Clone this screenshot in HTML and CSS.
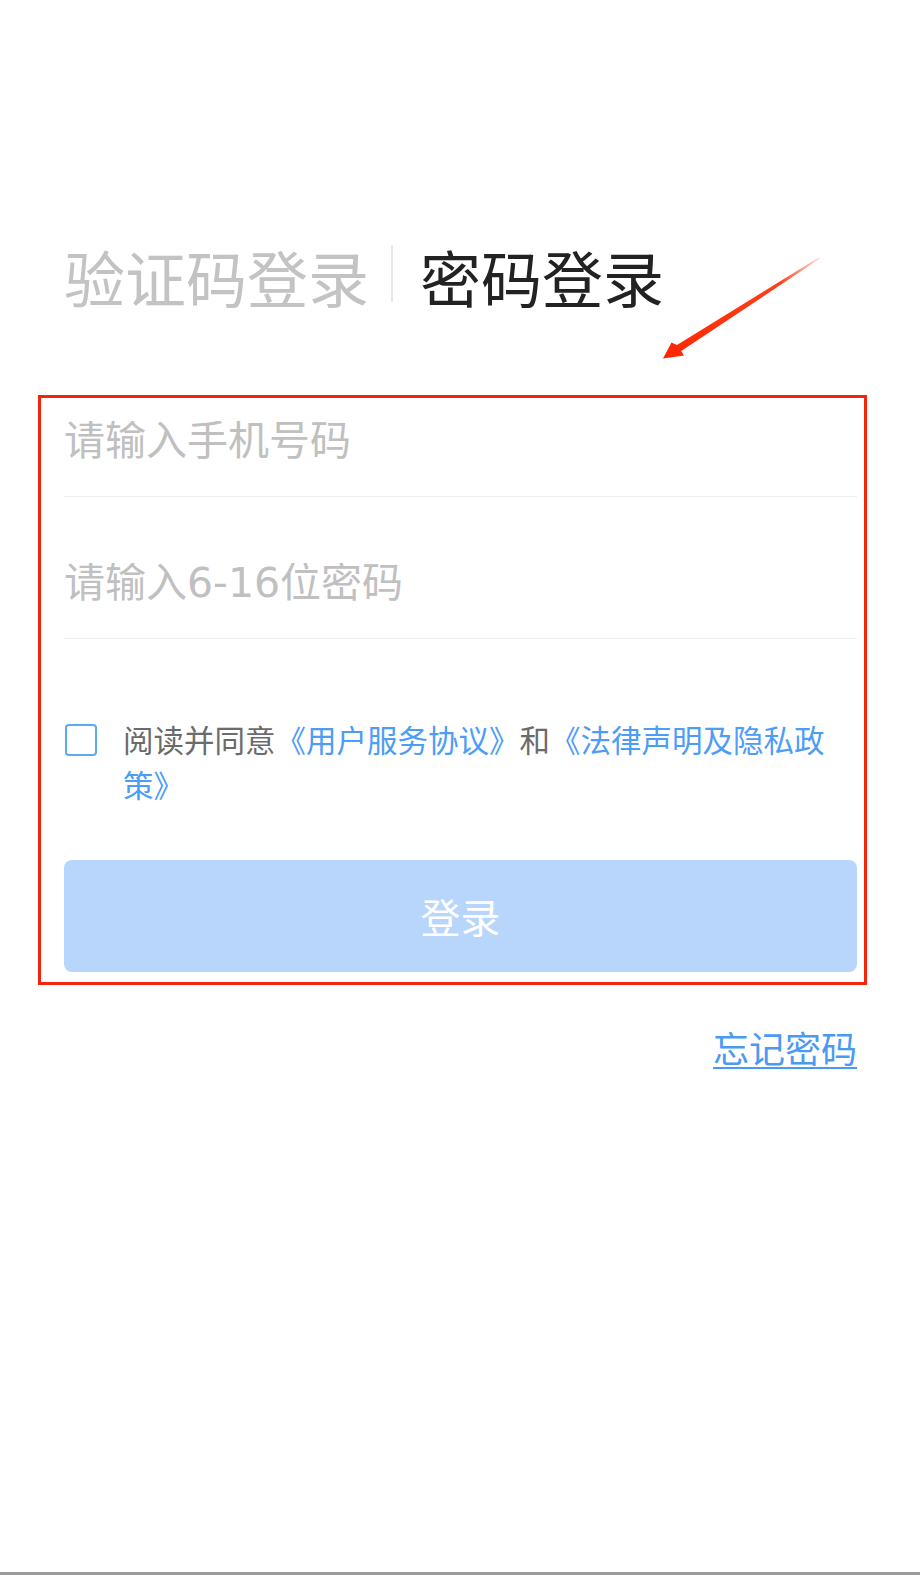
FILE: index.html
```html
<!DOCTYPE html>
<html lang="zh-CN">
<head>
  <meta charset="UTF-8" />
  <title>密码登录</title>
  <link rel="stylesheet" href="styles.css">
</head>
<body>
  <div class="page">
    <!-- Tabs: Verifizierungscode / Passwort -->
    <div class="tabs">
      <span class="tab">验证码登录</span>
      <span class="tab-divider"></span>
      <span class="tab active">密码登录</span>
    </div>

    <!-- Hinweis-Pfeil (Annotation) -->
    <svg class="hint-arrow" width="180" height="120" viewBox="0 0 180 120">
      <defs>
        <linearGradient id="arrowFade" x1="169" y1="8" x2="13" y2="108" gradientUnits="userSpaceOnUse">
          <stop offset="0" stop-color="#ff2a00" stop-opacity="0.15" />
          <stop offset="0.25" stop-color="#ff2a00" stop-opacity="0.9" />
          <stop offset="1" stop-color="#ff2600" />
        </linearGradient>
      </defs>
      <polygon fill="url(#arrowFade)" points="170,8.6 31.2,101 34,105.5 13,108.5 21.5,92.5 27,95 168.6,7.6" />
    </svg>

    <!-- Formular (rot umrandet) -->
    <div class="login-form">
      <div class="field field-first">
        <input type="text" placeholder="请输入手机号码" />
      </div>
      <div class="field">
        <input type="password" placeholder="请输入6-16位密码" />
      </div>

      <div class="agreement">
        <span class="checkbox"></span>
        <p class="agreement-text">阅读并同意<a href="#">《用户服务协议》</a>和<a href="#">《法律声明及隐私政策》</a></p>
      </div>

      <button class="login-btn" type="button">登录</button>
    </div>

    <div class="forgot">
      <a href="#">忘记密码</a>
    </div>
  </div>
</body>
</html>
```

FILE: styles.css
```css
/* --- Grunddesign --- */
body {
  margin: 0;
  padding: 0;
  font-family: "Noto Sans CJK SC", "Noto Sans", sans-serif;
  background: #fff;
}
.page {
  position: relative;
  min-height: 1575px;
  box-sizing: border-box;
  border-bottom: 3px solid #9a9a9a;
}

/* --- Tabs --- */
.tabs {
  display: flex;
  align-items: center;
  padding: 245px 0 0 64px;
  font-size: 61px;
  line-height: 60px;
}
.tab {
  color: #c3c3c3;
}
.tab.active {
  color: #222;
}
.tab-divider {
  width: 2px;
  height: 57px;
  margin: 0 27px 7px 22px;
  background: #e8e8e8;
}

/* --- Pfeil --- */
.hint-arrow {
  position: absolute;
  left: 650px;
  top: 250px;
}

/* --- Formular --- */
.login-form {
  margin: 86px 53px 0 38px;
  padding: 0 7px 10px 23px;
  border: 3px solid #f5250c;
}
.field {
  padding: 66px 0 35px;
  border-bottom: 1px solid #eeeeee;
}
.field-first {
  padding-top: 23px;
}
.field input {
  display: block;
  width: 100%;
  height: 40px;
  padding: 0;
  border: none;
  outline: none;
  font-family: "DejaVu Sans", "Noto Sans CJK SC", sans-serif;
  font-size: 41px;
  line-height: 40px;
  color: #333;
  background: transparent;
}
.field input::placeholder {
  color: #c0c0c0;
}

/* --- Zustimmung --- */
.agreement {
  display: flex;
  align-items: flex-start;
  margin-top: 78px;
}
.checkbox {
  flex: none;
  width: 28px;
  height: 28px;
  margin: 7px 0 0 1px;
  border: 2px solid #5aaaf5;
  border-radius: 4px;
}
.agreement-text {
  margin: 0 0 0 26px;
  font-size: 30.5px;
  line-height: 45px;
  color: #6b6b6b;
}
.agreement-text a {
  color: #4d9cf5;
  text-decoration: none;
}

/* --- Button --- */
.login-btn {
  display: block;
  width: 100%;
  height: 112px;
  margin-top: 53px;
  border: none;
  border-radius: 8px;
  background: #b8d5fb;
  color: #fff;
  font-family: "Noto Sans CJK SC", sans-serif;
  font-size: 40px;
}

/* --- Passwort vergessen --- */
.forgot {
  margin-top: 44px;
  padding-right: 63px;
  text-align: right;
  font-size: 36px;
  line-height: 36px;
}
.forgot a {
  color: #4a9af4;
  text-decoration: underline;
  text-decoration-thickness: 2px;
  text-underline-offset: 4px;
}
```
